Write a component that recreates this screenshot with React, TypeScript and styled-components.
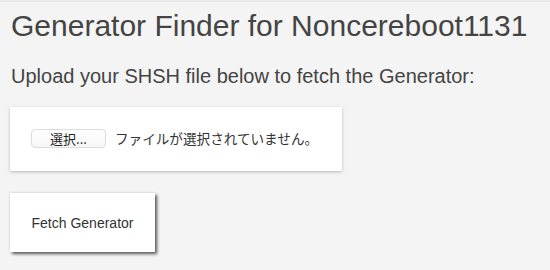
import React from "react";
import styled, { createGlobalStyle } from "styled-components";

const GlobalStyle = createGlobalStyle`
  html, body {
    margin: 0;
    padding: 0;
    background: #f4f4f4;
  }
  body {
    font-family: "Liberation Sans", Arial, sans-serif;
    color: #444;
  }
`;

const Page = styled.div`
  border-top: 2px solid #e9e9e9;
  padding: 0 10px;
  min-height: 268px;
`;

const Title = styled.h1`
  margin: 0;
  padding-top: 7px;
  padding-left: 1px;
  font-size: 30px;
  font-weight: 400;
  line-height: 34px;
  color: #444;
`;

const Subtitle = styled.p`
  margin: 0;
  padding-top: 21px;
  padding-left: 1px;
  font-size: 20px;
  line-height: 24px;
  color: #444;
`;

const UploadCard = styled.div`
  margin-top: 19px;
  width: 332px;
  height: 64px;
  box-sizing: border-box;
  padding: 22px 0 0 21px;
  background: #fff;
  box-shadow: 0 1px 3px rgba(0, 0, 0, 0.25);
  display: flex;
  align-items: flex-start;
  gap: 9px;
`;

const ChooseButton = styled.span`
  display: inline-flex;
  align-items: center;
  justify-content: center;
  width: 75px;
  height: 19px;
  box-sizing: border-box;
  border: 1px solid #dcdcdc;
  border-radius: 4px;
  background: linear-gradient(#ffffff, #f6f6f6);
  font-family: "Noto Sans CJK JP", sans-serif;
  font-size: 13px;
  color: #222;
`;

const FileStatus = styled.span`
  font-family: "Noto Sans CJK JP", sans-serif;
  font-size: 13.6px;
  line-height: 19px;
  color: #333;
`;

const FetchButton = styled.button`
  margin-top: 22px;
  width: 145px;
  height: 59px;
  border: none;
  background: #fff;
  box-shadow: 2px 2px 3px rgba(0, 0, 0, 0.65), -1px -1px 2px rgba(0, 0, 0, 0.06);
  font-family: "Liberation Sans", Arial, sans-serif;
  font-size: 14px;
  color: #333;
  padding: 0;
  cursor: pointer;
`;

export default function App() {
  return (
    <>
      <GlobalStyle />
      <Page>
        <Title>Generator Finder for Noncereboot1131</Title>
        <Subtitle>Upload your SHSH file below to fetch the Generator:</Subtitle>
        <UploadCard>
          <ChooseButton>選択...</ChooseButton>
          <FileStatus>ファイルが選択されていません。</FileStatus>
        </UploadCard>
        <FetchButton>Fetch Generator</FetchButton>
      </Page>
    </>
  );
}
